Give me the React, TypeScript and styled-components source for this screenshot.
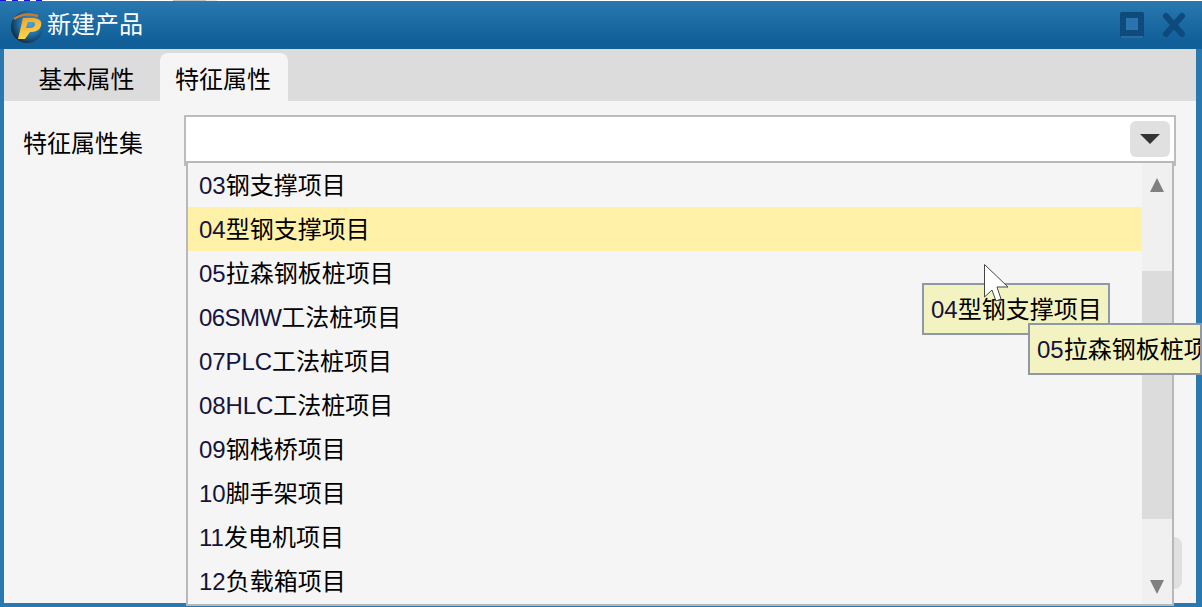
import React from "react";
import styled, { createGlobalStyle } from "styled-components";

const Global = createGlobalStyle`
  html, body { margin: 0; padding: 0; background: #fff; overflow: hidden; }
  * { box-sizing: border-box; }
`;

const FONT = `"Liberation Sans", "Noto Sans CJK SC", sans-serif`;

const Page = styled.div`
  width: 1202px;
  height: 607px;
  font-family: ${FONT};
  font-size: 24px;
  color: #000;
`;

const TopStrip = styled.div`
  height: 1px;
  background:
    linear-gradient(90deg, transparent 173px, #c4c4c4 173px, #c4c4c4 206px, #e8e8e8 206px, #e8e8e8 217px, transparent 217px),
    repeating-linear-gradient(90deg, #1414e0 0 6px, #fff 6px 12px) 0 0 / 45px 1px no-repeat,
    #fff;
`;

const Win = styled.div`
  position: relative;
  width: 100%;
  height: 606px;
  display: flex;
  flex-direction: column;
  background: #2a78b0;
  padding: 0 6px 4px 4px;
`;

const TitleBar = styled.div`
  height: 48px;
  flex: none;
  margin: 0 -6px 0 -4px;
  padding: 0 16px 0 10px;
  display: flex;
  align-items: center;
  background: linear-gradient(#2a78b0, #105f98 85%);
  color: #fff;
`;

const TitleText = styled.span`
  margin-left: 3px;
  line-height: 48px;
  flex: 1;
`;

const WinBtn = styled.svg`
  display: block;
  margin-left: 18px;
  flex: none;
`;

const TabBar = styled.div`
  height: 52px;
  flex: none;
  background: #dcdcdc;
  display: flex;
  align-items: flex-end;
  padding-left: 11px;
`;

const Tab = styled.div<{ $active?: boolean }>`
  width: ${(p) => (p.$active ? "128px" : "145px")};
  height: 48px;
  flex: none;
  display: flex;
  align-items: center;
  justify-content: center;
  padding-right: 2px;
  border-radius: 8px 8px 0 0;
  background: ${(p) => (p.$active ? "#f5f5f5" : "transparent")};
`;

const Body = styled.div`
  flex: 1;
  background: #f5f5f5;
  display: flex;
  flex-direction: column;
  padding: 14px 14px 14px 19px;
`;

const FormRow = styled.div`
  display: flex;
  align-items: flex-start;
  height: 48px;
  margin-right: 6px;
`;

const Label = styled.label`
  width: 161px;
  flex: none;
  line-height: 58px;
`;

const Combo = styled.div`
  flex: 1;
  height: 51px;
  border: 2px solid #bcbcbc;
  background: #fff;
  display: flex;
  align-items: flex-start;
  justify-content: flex-end;
  padding: 4px 4px 0 0;
`;

const ComboBtn = styled.div`
  width: 40px;
  height: 36px;
  border-radius: 6px;
  background: #e0e0e0;
  display: flex;
  align-items: center;
  justify-content: center;
`;

const Footer = styled.div`
  margin-top: auto;
  display: flex;
  justify-content: flex-end;
`;

const HiddenBtn = styled.div`
  width: 110px;
  height: 52px;
  border-radius: 8px;
  background: #e0e0e0;
`;

const Dropdown = styled.div`
  position: absolute;
  left: 186px;
  top: 160px;
  width: 988px;
  height: 445px;
  border: 2px solid #b8b8b8;
  background: #f5f5f5;
  display: flex;
`;

const List = styled.div`
  flex: 1;
  min-width: 0;
`;

const Row = styled.div<{ $hl?: boolean }>`
  height: 44px;
  line-height: 46px;
  padding-left: 11px;
  background: ${(p) => (p.$hl ? "#fff2a8" : "transparent")};
  white-space: nowrap;
`;

const Code = styled.span<{ $squeeze?: number }>`
  color: #14143c;
  letter-spacing: ${(p) => p.$squeeze ?? 0}px;
`;

const ScrollBar = styled.div`
  width: 30px;
  flex: none;
  background: #f0f0f0;
  display: flex;
  flex-direction: column;
`;

const ScrollArrow = styled.div<{ $down?: boolean }>`
  height: 44px;
  flex: none;
  display: flex;
  align-items: ${(p) => (p.$down ? "flex-end" : "center")};
  justify-content: center;
  padding-bottom: ${(p) => (p.$down ? "10px" : "0")};
`;

const ScrollGap = styled.div`
  height: 64px;
  flex: none;
`;

const Thumb = styled.div`
  height: 248px;
  flex: none;
  background: #dcdcdc;
`;

const ScrollRest = styled.div`
  flex: 1;
`;

const Tip = styled.div<{ $x: number; $y: number; $w: number }>`
  position: absolute;
  left: ${(p) => p.$x}px;
  top: ${(p) => p.$y}px;
  width: ${(p) => p.$w}px;
  height: 52px;
  border: 2px solid #9097a5;
  background: #f3f3c2;
  padding-left: 7px;
  line-height: 50px;
  white-space: nowrap;
  overflow: hidden;
`;

const Cursor = styled.svg`
  position: absolute;
  left: 984px;
  top: 262px;
`;

const LogoSvg = styled.svg`
  display: block;
  flex: none;
  margin-top: 4px;
`;

const items: { code: string; name: string; squeeze?: number }[] = [
  { code: "03", name: "钢支撑项目" },
  { code: "04", name: "型钢支撑项目" },
  { code: "05", name: "拉森钢板桩项目" },
  { code: "06SMW", name: "工法桩项目", squeeze: -0.6 },
  { code: "07PLC", name: "工法桩项目", squeeze: -0.1 },
  { code: "08HLC", name: "工法桩项目", squeeze: -0.1 },
  { code: "09", name: "钢栈桥项目" },
  { code: "10", name: "脚手架项目" },
  { code: "11", name: "发电机项目" },
  { code: "12", name: "负载箱项目" },
];

const Logo = () => (
  <LogoSvg width="34" height="34" viewBox="0 0 34 34">
    <defs>
      <radialGradient id="lg" cx="0.6" cy="0.4" r="0.65">
        <stop offset="0" stopColor="#4aa6dc" />
        <stop offset="0.55" stopColor="#1c6da6" />
        <stop offset="1" stopColor="#14283c" />
      </radialGradient>
      <linearGradient id="pg" x1="0" y1="0" x2="0.3" y2="1">
        <stop offset="0" stopColor="#f0a030" />
        <stop offset="1" stopColor="#ffd84a" />
      </linearGradient>
    </defs>
    <circle cx="17" cy="17" r="16" fill="url(#lg)" />
    <path d="M4 9 Q14 2 28 6" fill="none" stroke="#c97a2a" strokeWidth="2.5" />
    <path
      d="M13 8 H24 Q33 9 31 16 Q29 22 20 22 L15 29 H8 Z M18 12 L16 18 H21 Q25 17 25 14 Q25 12 22 12 Z"
      fill="url(#pg)"
      fillRule="evenodd"
    />
  </LogoSvg>
);

export default function App() {
  return (
    <Page>
      <Global />
      <TopStrip />
      <Win>
        <TitleBar>
          <Logo />
          <TitleText>新建产品</TitleText>
          <WinBtn width="24" height="26" viewBox="0 0 24 26">
            <rect x="0" y="0" width="24" height="26" rx="2" fill="#0f4a7c" />
            <rect x="1" y="24" width="22" height="2" fill="#2a6a9c" />
            <rect x="6" y="6" width="12" height="12" fill="#2a74ab" />
          </WinBtn>
          <WinBtn width="24" height="26" viewBox="0 0 24 26">
            <path d="M4 4 L20 22 M20 4 L4 22" stroke="#0f4a7c" strokeWidth="6" strokeLinecap="round" />
          </WinBtn>
        </TitleBar>
        <TabBar>
          <Tab>基本属性</Tab>
          <Tab $active>特征属性</Tab>
        </TabBar>
        <Body>
          <FormRow>
            <Label>特征属性集</Label>
            <Combo>
              <ComboBtn>
                <svg width="20" height="10" viewBox="0 0 20 10">
                  <path d="M0 0 H20 L10 10 Z" fill="#333" />
                </svg>
              </ComboBtn>
            </Combo>
          </FormRow>
          <Footer>
            <HiddenBtn />
          </Footer>
        </Body>
        <Dropdown>
          <List>
            {items.map((t, i) => (
              <Row key={t.code} $hl={i === 1}>
                <Code $squeeze={t.squeeze}>{t.code}</Code>
                {t.name}
              </Row>
            ))}
          </List>
          <ScrollBar>
            <ScrollArrow>
              <svg width="14" height="14" viewBox="0 0 14 14">
                <path d="M7 0 L14 14 H0 Z" fill="#808080" />
              </svg>
            </ScrollArrow>
            <ScrollGap />
            <Thumb />
            <ScrollRest />
            <ScrollArrow $down>
              <svg width="14" height="14" viewBox="0 0 14 14">
                <path d="M0 0 H14 L7 14 Z" fill="#808080" />
              </svg>
            </ScrollArrow>
          </ScrollBar>
        </Dropdown>
        <Tip $x={922} $y={282} $w={188}>
          <Code>04</Code>型钢支撑项目
        </Tip>
        <Tip $x={1028} $y={322} $w={174}>
          <Code>05</Code>拉森钢板桩项目
        </Tip>
        <Cursor width="26" height="40" viewBox="0 0 26 40">
          <path d="M0.5 1.5 V34 L8 27 L12 38 L17 36 L13 24 L24 24 Z" fill="#fff" stroke="#444" strokeWidth="1" />
        </Cursor>
      </Win>
    </Page>
  );
}
